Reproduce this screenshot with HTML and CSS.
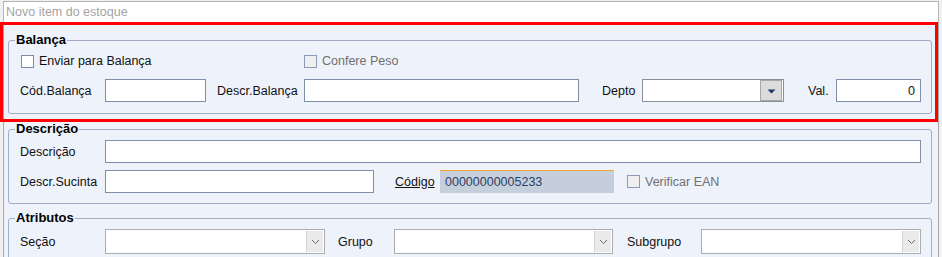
FILE: index.html
```html
<!DOCTYPE html>
<html lang="pt-BR">
<head>
    <meta charset="UTF-8">
    <title>Novo item do estoque</title>
    <link rel="stylesheet" href="styles.css">
</head>
<body>

    <div class="window">
        <input type="text" class="title-input" placeholder="Novo item do estoque">

        <div class="panel">
            <!-- Balança -->
            <fieldset class="group group-balanca">
                <legend>Balança</legend>
                <div class="group-body">
                    <div class="row row-checks">
                        <label class="check check-wide"><span class="box"></span>Enviar para Balança</label>
                        <label class="check disabled"><span class="box"></span>Confere Peso</label>
                    </div>
                    <div class="row row-gap">
                        <span class="lbl lbl-main">Cód.Balança</span>
                        <input type="text" class="field w-codbal">
                        <span class="lbl lbl-descbal">Descr.Balança</span>
                        <input type="text" class="field w-descbal">
                        <span class="lbl lbl-depto">Depto</span>
                        <div class="combo w-depto">
                            <span class="combo-btn">
                                <svg width="9" height="6" viewBox="0 0 9 6"><path d="M0.5 1.5h8L4.5 5.5z" fill="#1d3b6c"/></svg>
                            </span>
                        </div>
                        <span class="lbl lbl-val">Val.</span>
                        <input type="text" class="field w-val num" value="0">
                    </div>
                </div>
            </fieldset>

            <!-- Descrição -->
            <fieldset class="group group-desc">
                <legend>Descrição</legend>
                <div class="group-body">
                    <div class="row">
                        <span class="lbl lbl-main">Descrição</span>
                        <input type="text" class="field grow">
                    </div>
                    <div class="row row-gap-sm">
                        <span class="lbl lbl-main">Descr.Sucinta</span>
                        <input type="text" class="field w-sucinta">
                        <span class="lbl lbl-codigo"><u>Código</u></span>
                        <input type="text" class="field code" value="00000000005233" readonly>
                        <label class="check disabled check-ean"><span class="box"></span>Verificar EAN</label>
                    </div>
                </div>
            </fieldset>

            <!-- Atributos -->
            <fieldset class="group group-attr">
                <legend>Atributos</legend>
                <div class="group-body">
                    <div class="row">
                        <span class="lbl lbl-main">Seção</span>
                        <div class="select w-secao">
                            <span class="select-btn"><svg width="9" height="6" viewBox="0 0 9 6"><path d="M1 1l3.5 3.5L8 1" fill="none" stroke="#6b6b6b"/></svg></span>
                        </div>
                        <span class="lbl lbl-grupo">Grupo</span>
                        <div class="select w-grupo">
                            <span class="select-btn"><svg width="9" height="6" viewBox="0 0 9 6"><path d="M1 1l3.5 3.5L8 1" fill="none" stroke="#6b6b6b"/></svg></span>
                        </div>
                        <span class="lbl lbl-sub">Subgrupo</span>
                        <div class="select grow">
                            <span class="select-btn"><svg width="9" height="6" viewBox="0 0 9 6"><path d="M1 1l3.5 3.5L8 1" fill="none" stroke="#6b6b6b"/></svg></span>
                        </div>
                    </div>
                </div>
            </fieldset>
        </div>

        <!-- highlight frame drawn over the Balança box -->
        <div class="highlight"></div>
    </div>

</body>
</html>
```

FILE: styles.css
```css
/* Base window look */
body {
    margin: 0;
    background-color: #f0f0f0;
    font-family: "Liberation Sans", Arial, sans-serif;
    font-size: 12.5px;
    color: #111;
    overflow: hidden;
}

.window {
    position: relative;
    margin: 1px 3px 0 3px;
    height: 256px;
    display: flex;
    flex-direction: column;
}

.title-input {
    flex: none;
    height: 22px;
    margin: 0;
    padding: 0 2px;
    border: 1px solid #b5b5b5;
    background: white;
    font-family: inherit;
    font-size: 12.5px;
    box-sizing: border-box;
    outline: none;
}

.title-input::placeholder {
    color: #a3a3a3;
}

.panel {
    flex: 1;
    min-height: 0;
    overflow: hidden;
    background-color: #eef2fb;
    border-left: 1px solid #a9a9a9;
    border-right: 1px solid #a9a9a9;
    padding-top: 9px;
}

/* Group boxes */
.group {
    margin: 0 0 0 4px;
    padding: 0;
    width: 924px;
    box-sizing: border-box;
    border: 1px solid #a3adc4;
    border-radius: 3px;
    min-inline-size: 0;
}

.group legend {
    margin-left: 6px;
    padding: 0 1px;
    font-weight: bold;
    font-size: 13px;
    line-height: 16px;
    color: #000;
}

.group-desc { margin-top: 7px; }
.group-attr { margin-top: 6px; }

.group-balanca .group-body { padding: 5px 10px 11px 11px; }
.group-desc .group-body { padding: 3px 10px 10px 11px; }
.group-attr .group-body { padding: 3px 10px 10px 11px; }

.row {
    display: flex;
    align-items: center;
}

.row-checks { height: 16px; }
.row-gap { margin-top: 10px; }
.row-gap-sm { margin-top: 7px; }

.lbl {
    white-space: nowrap;
    flex: none;
}

.lbl-main { width: 85px; }
.lbl-descbal { width: 87px; margin-left: 11px; }
.lbl-depto { width: 40px; margin-left: 23px; }
.lbl-val { width: 28px; margin-left: 24px; }
.lbl-codigo { width: 45px; margin-left: 21px; }
.lbl-grupo { width: 56px; margin-left: 13px; }
.lbl-sub { width: 74px; margin-left: 14px; }

/* Edit fields */
.field {
    height: 23px;
    margin: 0;
    padding: 0 4px;
    border: 1px solid #8090ab;
    background: white;
    box-sizing: border-box;
    font-family: inherit;
    font-size: 12.5px;
    color: #111;
    outline: none;
    flex: none;
}

.grow { flex: 1; }
.field.grow { flex: 1; width: auto; }

.w-codbal { width: 101px; }
.w-descbal { width: 275px; }
.w-val { width: 85px; }
.w-sucinta { width: 269px; }

.num {
    text-align: right;
    padding-right: 5px;
}

.code {
    width: 174px;
    background-color: #c5cfdb;
    border: none;
    border-top: 1px solid #f5a33a;
    color: #2d4066;
    padding-left: 5px;
}

/* Depto combo */
.combo {
    height: 23px;
    border: 1px solid #8a8f99;
    background: white;
    box-sizing: border-box;
    display: flex;
    justify-content: flex-end;
    align-items: stretch;
    padding: 0 1px 0 0;
    flex: none;
}

.w-depto { width: 142px; }

.combo-btn {
    width: 22px;
    background-color: #dcdcdc;
    border: 1px solid #a8a8a8;
    box-sizing: border-box;
    display: flex;
    align-items: center;
    justify-content: center;
}

/* Atributos selects */
.select {
    height: 25px;
    border: 1px solid #abadb3;
    background: white;
    box-sizing: border-box;
    display: flex;
    justify-content: flex-end;
    padding: 1px;
    flex: none;
}

.select.grow { flex: 1; }

.w-secao { width: 220px; }
.w-grupo { width: 219px; }

.select-btn {
    width: 16px;
    background-color: #eaeaea;
    border-left: 1px solid #d2d2d2;
    display: flex;
    align-items: center;
    justify-content: center;
}

/* Check boxes */
.check {
    display: flex;
    align-items: center;
    white-space: nowrap;
    flex: none;
}

.check .box {
    width: 13px;
    height: 13px;
    border: 1px solid #7c8ca8;
    background: white;
    box-sizing: border-box;
    margin-right: 5px;
}

.check-wide {
    width: 283px;
    margin-left: 1px;
}

.check.disabled {
    color: #707070;
}

.check.disabled .box {
    background-color: #efefef;
    border-color: #8d9cb6;
}

.check-ean { margin-left: 13px; }

/* Red highlight frame */
.highlight {
    position: absolute;
    left: -3px;
    top: 21px;
    width: 938px;
    height: 100px;
    border: 3px solid #ff0000;
    box-sizing: border-box;
    pointer-events: none;
}
```
